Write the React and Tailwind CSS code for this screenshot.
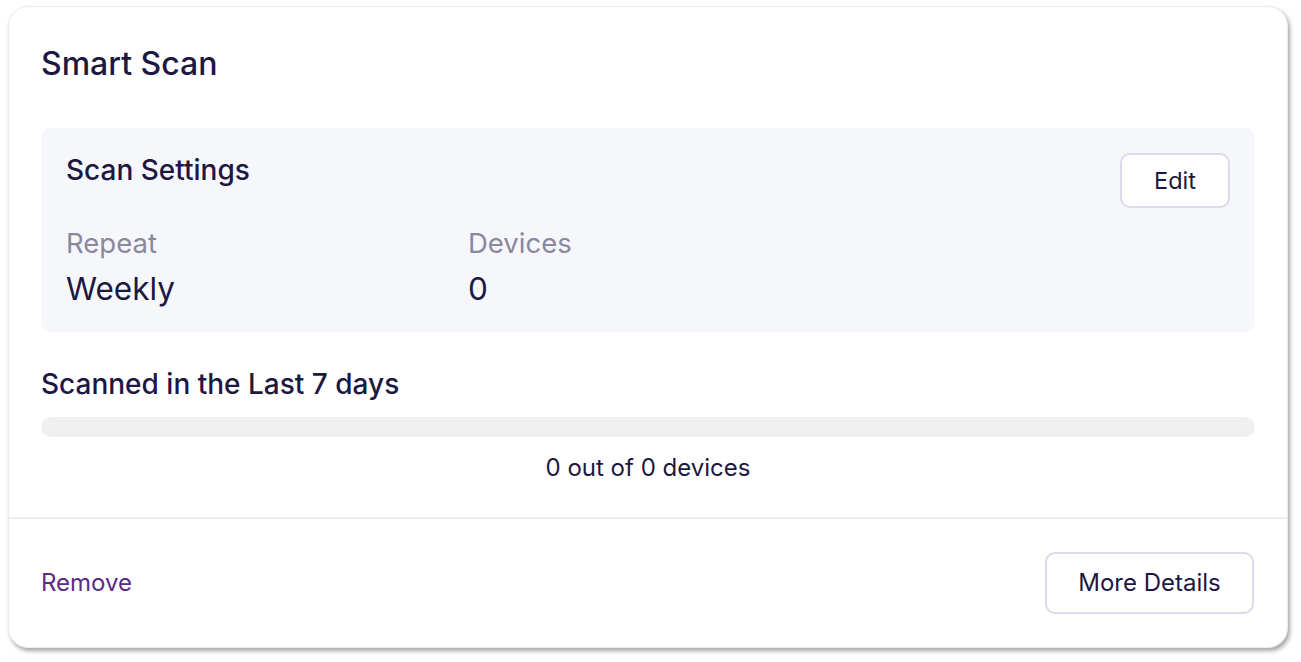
import React from 'react';

const SmartScanCard = () => {
    const repeat = 'Weekly';
    const devices = 0;
    const scanned = 0;
    const pct = devices ? (scanned / devices) * 100 : 0;

    return (
        <div className="w-[1280px] h-[642px] flex flex-col rounded-[20px] bg-white border border-[#ebebeb] shadow-[2px_3px_4px_rgba(0,0,0,0.35)] text-[#1c1842]">
            {/* Body */}
            <div className="px-[32px] pt-[37px] pb-[33px]">
                <h2 className="text-[32px] leading-[40px] font-medium">Smart Scan</h2>

                {/* Settings box */}
                <div className="mt-[44px] rounded-[10px] bg-[#f6f7fa] px-[25px] pt-[25px] pb-[23px]">
                    <div className="flex items-start justify-between">
                        <h3 className="text-[28px] leading-[34px] font-medium">Scan Settings</h3>
                        <button className="w-[110px] h-[55px] rounded-[10px] border-2 border-[#dcd9ea] bg-white text-[23.5px] text-[#1c1842]">
                            Edit
                        </button>
                    </div>
                    <div className="mt-[18px] grid grid-cols-[402px_1fr]">
                        <div>
                            <p className="text-[27.5px] leading-[34px] text-[#8a879e]">Repeat</p>
                            <p className="mt-[9px] text-[31.5px] leading-[40px]">{repeat}</p>
                        </div>
                        <div>
                            <p className="text-[27.5px] leading-[34px] text-[#8a879e]">Devices</p>
                            <p className="mt-[9px] text-[31.5px] leading-[40px]">{devices}</p>
                        </div>
                    </div>
                </div>

                {/* Last 7 days */}
                <h3 className="mt-[35px] text-[28px] leading-[34px] font-medium">Scanned in the Last 7 days</h3>
                <div className="mt-[16px] h-[20px] rounded-full bg-[#f0f0f0] overflow-hidden">
                    <div className="h-full rounded-full bg-[#5b2a86]" style={{ width: `${pct}%` }} />
                </div>
                <p className="mt-[15px] text-center text-[24px] leading-[32px]">
                    {scanned} out of {devices} devices
                </p>
            </div>

            <div className="h-[2px] bg-[#efefef]" />

            {/* Footer */}
            <div className="flex-1 flex items-center justify-between pl-[32px] pr-[33px]">
                <button className="text-[24px] text-[#5b2a86]">Remove</button>
                <button className="w-[209px] h-[62px] rounded-[10px] border-2 border-[#dcd9ea] bg-white text-[24px] text-[#1c1842]">
                    More Details
                </button>
            </div>
        </div>
    );
};

export default function App() {
    return (
        <div className="min-h-screen bg-white pl-[8px] pt-[6px] font-['Inter',sans-serif]">
            <SmartScanCard />
        </div>
    );
}
